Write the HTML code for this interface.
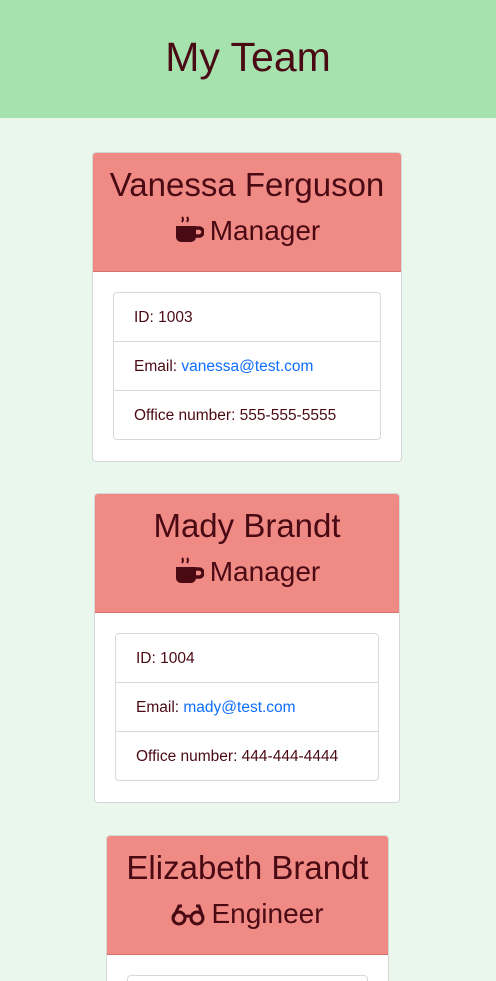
<!DOCTYPE html>
<html><head><meta charset="utf-8"><style>
html,body{margin:0;width:496px;height:981px;overflow:hidden}
body{position:relative;background:#e9f7ec;font-family:"Liberation Sans",sans-serif;color:#4a0a14}
.top{height:118px;background:#a6e2ae;text-align:center;font-size:41px;line-height:114px}
.card{position:absolute;background:#fff;border:1px solid #d6d6d6;border-radius:4px;overflow:hidden}
.hd{background:#f08a84;height:118px;border-bottom:1px solid #d8706c;text-align:center}
.n{font-size:33px;padding-top:13px;line-height:38px}
.r{font-size:28px;line-height:34px;margin-top:10px}
.r svg{vertical-align:-3px;margin-right:6px}
.ul{margin:20px 20px 0;border:1px solid #d9d9d9;border-radius:4px}
.li{height:48px;line-height:50px;padding-left:20px;font-size:15.5px;border-top:1px solid #d9d9d9}
.li:first-child{border-top:0}
a{color:#0d6efd;text-decoration:none}
</style></head><body>
<div class="top">My Team</div>
<div class="card" style="left:92px;top:152px;width:308px;height:308px">
<div class="hd"><div class="n">Vanessa Ferguson</div><div class="r"><svg width="30" height="28" viewBox="0 0 30 28"><path d="M2 11h20v11a5 5 0 0 1-5 5H7a5 5 0 0 1-5-5z" fill="#4a0a14"/><path d="M22 13h3a4 4 0 0 1 0 8h-3" fill="none" stroke="#4a0a14" stroke-width="3.5"/><path d="M8 2q2 2 0 5M13 2q2 2 0 5" stroke="#4a0a14" stroke-width="2" fill="none"/></svg>Manager</div></div>
<div class="ul"><div class="li">ID: 1003</div><div class="li">Email: <a>vanessa@test.com</a></div><div class="li">Office number: 555-555-5555</div></div>
</div>
<div class="card" style="left:94px;top:493px;width:304px;height:308px">
<div class="hd"><div class="n">Mady Brandt</div><div class="r"><svg width="30" height="28" viewBox="0 0 30 28"><path d="M2 11h20v11a5 5 0 0 1-5 5H7a5 5 0 0 1-5-5z" fill="#4a0a14"/><path d="M22 13h3a4 4 0 0 1 0 8h-3" fill="none" stroke="#4a0a14" stroke-width="3.5"/><path d="M8 2q2 2 0 5M13 2q2 2 0 5" stroke="#4a0a14" stroke-width="2" fill="none"/></svg>Manager</div></div>
<div class="ul"><div class="li">ID: 1004</div><div class="li">Email: <a>mady@test.com</a></div><div class="li">Office number: 444-444-4444</div></div>
</div>
<div class="card" style="left:106px;top:835px;width:281px;height:160px">
<div class="hd"><div class="n">Elizabeth Brandt</div><div class="r"><svg width="34" height="24" viewBox="0 0 34 24"><circle cx="8" cy="16" r="6" fill="none" stroke="#4a0a14" stroke-width="3"/><circle cx="26" cy="16" r="6" fill="none" stroke="#4a0a14" stroke-width="3"/><path d="M14 15q3-2 6 0M2 16L8 4h3M32 16L28 4h-3" fill="none" stroke="#4a0a14" stroke-width="3"/></svg>Engineer</div></div>
<div class="ul" style="height:40px"></div>
</div>
</body></html>
